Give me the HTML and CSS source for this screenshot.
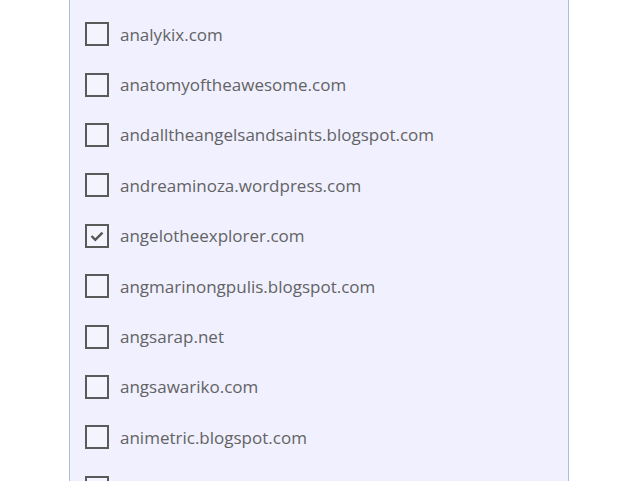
FILE: index.html
```html
<!DOCTYPE html>
<html lang="en">
<head>
    <meta charset="UTF-8">
    <meta name="viewport" content="width=device-width, initial-scale=1.0">
    <title>Sites</title>
    <link rel="stylesheet" href="styles.css">
</head>
<body>
    <div class="panel">
        <ul class="site-list">
            <li class="site"><span class="box"></span><span class="name">analykix.com</span></li>
            <li class="site"><span class="box"></span><span class="name">anatomyoftheawesome.com</span></li>
            <li class="site"><span class="box"></span><span class="name">andalltheangelsandsaints.blogspot.com</span></li>
            <li class="site"><span class="box"></span><span class="name">andreaminoza.wordpress.com</span></li>
            <li class="site"><span class="box checked"><svg viewBox="0 0 20 20" width="20" height="20"><path d="M4.5 10l3.8 3.8 7.2-7.2" fill="none" stroke="#555" stroke-width="2.4"/></svg></span><span class="name">angelotheexplorer.com</span></li>
            <li class="site"><span class="box"></span><span class="name">angmarinongpulis.blogspot.com</span></li>
            <li class="site"><span class="box"></span><span class="name">angsarap.net</span></li>
            <li class="site"><span class="box"></span><span class="name">angsawariko.com</span></li>
            <li class="site"><span class="box"></span><span class="name">animetric.blogspot.com</span></li>
            <li class="site"><span class="box"></span></li>
        </ul>
    </div>
</body>
</html>
```

FILE: styles.css
```css
body { margin: 0; background: #fff; font-family: "Open Sans", "Noto Sans", sans-serif; overflow: hidden; }
.panel { width: 498px; margin-left: 69px; height: 600px; background: #f0f0ff; border-left: 1px solid #a9c1d8; border-right: 1px solid #a9c1d8; }
.site-list { list-style: none; margin: 0; padding: 9px 0 0 15px; }
.site { display: flex; align-items: center; height: 50.4px; }
.box { width: 20px; height: 20px; border: 2px solid #5a5a5a; background: #f4f4ff; display: flex; align-items: center; justify-content: center; flex: none; }
.name { margin-left: 11px; font-size: 17px; color: #636363; }
```
